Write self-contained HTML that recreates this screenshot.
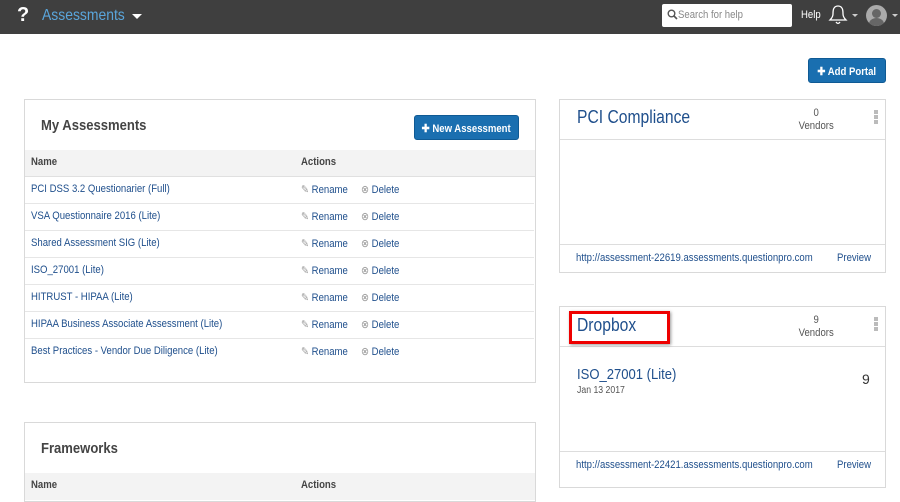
<!DOCTYPE html>
<html><head><meta charset="utf-8"><style>
*{margin:0;padding:0;box-sizing:border-box}
body{width:900px;height:487px;overflow:hidden;background:#fff;font-family:"Liberation Sans",sans-serif;position:relative;color:#333}
.a{position:absolute;white-space:nowrap}
.s{transform:scaleX(.87);transform-origin:0 0}
.i{display:inline-block;transform:scaleX(.87);transform-origin:0 0;white-space:nowrap}
.ic2{display:inline-block;transform:scaleX(.87);transform-origin:50% 0;white-space:nowrap}
.hdr{left:0;top:0;width:900px;height:34px;background:#3f3f3f}
.card{border:1px solid #d9d9d9;background:#fff}
.btn{background:#1a6fb0;border:1px solid #0f5a94;border-radius:3px;color:#fff;font-size:11px;font-weight:bold;text-align:center}
.row{left:25px;width:509px;height:27px;border-bottom:1px solid #e6e6e6;font-size:11px}
.row .n{position:absolute;left:6px;top:6px;color:#1f4f8c}
.row .r{position:absolute;left:276px;top:6px;color:#1f4f8c}
.row .d{position:absolute;left:336px;top:6px;color:#1f4f8c}
.ic{color:#999}
</style></head><body>
<div class="a hdr"></div>
<div class="a" style="left:17px;top:4px;color:#fff;font:bold 20px 'Liberation Sans',sans-serif">?</div>
<div class="a s" style="left:42px;top:7px;color:#5aa6dc;font-size:16px">Assessments</div>
<div class="a" style="left:132px;top:14px;width:0;height:0;border-left:5px solid transparent;border-right:5px solid transparent;border-top:5px solid #fff"></div>
<div class="a" style="left:662px;top:4px;width:130px;height:23px;background:#fff;border-radius:2px;font-size:11px;color:#888;padding:5px 0 0 16px"><span class="i">Search for help</span></div>
<svg class="a" style="left:667px;top:9px" width="11" height="11"><circle cx="4.5" cy="4.5" r="3.3" fill="none" stroke="#555" stroke-width="1.4"/><line x1="7" y1="7" x2="10" y2="10" stroke="#555" stroke-width="1.6"/></svg>
<div class="a s" style="left:801px;top:9px;color:#fff;font-size:11px">Help</div>
<svg class="a" style="left:828px;top:4px" width="20" height="21"><path d="M10 2 C5 2 5 7 5 10 C5 13 3 15 2 16 L18 16 C17 15 15 13 15 10 C15 7 15 2 10 2Z M8 18 Q10 21 12 18" fill="none" stroke="#fff" stroke-width="1.3"/></svg>
<div class="a" style="left:852px;top:14px;border-left:3px solid transparent;border-right:3px solid transparent;border-top:3px solid #ccc"></div>
<div class="a" style="left:866px;top:5px;width:21px;height:21px;border-radius:50%;background:#aaa;overflow:hidden"><div class="a" style="left:6px;top:4px;width:9px;height:9px;border-radius:50%;background:#666"></div><div class="a" style="left:3px;top:13px;width:15px;height:12px;border-radius:50%;background:#666"></div></div>
<div class="a" style="left:892px;top:14px;border-left:3px solid transparent;border-right:3px solid transparent;border-top:3px solid #ccc"></div>

<div class="a btn" style="left:808px;top:58px;width:78px;height:25px;padding-top:6px"><span class="ic2">✚ Add Portal</span></div>

<div class="a card" style="left:24px;top:99px;width:512px;height:284px"></div>
<div class="a s" style="left:41px;top:117px;font-size:15px;font-weight:bold;color:#444">My Assessments</div>
<div class="a btn" style="left:414px;top:115px;width:105px;height:25px;padding-top:6px"><span class="ic2">✚ New Assessment</span></div>
<div class="a" style="left:25px;top:150px;width:510px;height:27px;background:#f3f3f3;border-bottom:1px solid #e0e0e0;font-size:11px;font-weight:bold;color:#444"><span class="a s" style="left:6px;top:6px">Name</span><span class="a s" style="left:276px;top:6px">Actions</span></div>
<div class="a row" style="top:177px"><span class="n s">PCI DSS 3.2 Questionarier (Full)</span><span class="r s"><span class="ic">✎</span> Rename</span><span class="d s"><span class="ic">⊗</span> Delete</span></div>
<div class="a row" style="top:204px"><span class="n s">VSA Questionnaire 2016 (Lite)</span><span class="r s"><span class="ic">✎</span> Rename</span><span class="d s"><span class="ic">⊗</span> Delete</span></div>
<div class="a row" style="top:231px"><span class="n s">Shared Assessment SIG (Lite)</span><span class="r s"><span class="ic">✎</span> Rename</span><span class="d s"><span class="ic">⊗</span> Delete</span></div>
<div class="a row" style="top:258px"><span class="n s">ISO_27001 (Lite)</span><span class="r s"><span class="ic">✎</span> Rename</span><span class="d s"><span class="ic">⊗</span> Delete</span></div>
<div class="a row" style="top:285px"><span class="n s">HITRUST - HIPAA (Lite)</span><span class="r s"><span class="ic">✎</span> Rename</span><span class="d s"><span class="ic">⊗</span> Delete</span></div>
<div class="a row" style="top:312px"><span class="n s">HIPAA Business Associate Assessment (Lite)</span><span class="r s"><span class="ic">✎</span> Rename</span><span class="d s"><span class="ic">⊗</span> Delete</span></div>
<div class="a row" style="top:339px;border-bottom:none"><span class="n s">Best Practices - Vendor Due Diligence (Lite)</span><span class="r s"><span class="ic">✎</span> Rename</span><span class="d s"><span class="ic">⊗</span> Delete</span></div>

<div class="a card" style="left:24px;top:422px;width:512px;height:80px"></div>
<div class="a s" style="left:41px;top:440px;font-size:15px;font-weight:bold;color:#444">Frameworks</div>
<div class="a" style="left:25px;top:473px;width:510px;height:27px;background:#f3f3f3;font-size:11px;font-weight:bold;color:#444"><span class="a s" style="left:6px;top:6px">Name</span><span class="a s" style="left:276px;top:6px">Actions</span></div>

<div class="a card" style="left:559px;top:99px;width:327px;height:174px"></div>
<div class="a" style="left:560px;top:139px;width:325px;border-top:1px solid #ddd"></div>
<div class="a" style="left:560px;top:244px;width:325px;border-top:1px solid #ddd"></div>
<div class="a s" style="left:577px;top:107px;font-size:18px;color:#1f4f8c">PCI Compliance</div>
<div class="a" style="left:790px;top:107px;width:52px;text-align:center;font-size:11px;color:#555;line-height:13px"><span class="ic2">0<br>Vendors</span></div>
<div class="a" style="left:874px;top:110px;width:4px;height:14px;background:repeating-linear-gradient(#bbb 0 4px,transparent 4px 5px)"></div>
<div class="a s" style="left:576px;top:252px;font-size:11px;color:#1f4f8c">http://assessment-22619.assessments.questionpro.com</div>
<div class="a s" style="left:837px;top:252px;font-size:11px;color:#1f4f8c">Preview</div>

<div class="a card" style="left:559px;top:306px;width:327px;height:182px"></div>
<div class="a" style="left:560px;top:346px;width:325px;border-top:1px solid #ddd"></div>
<div class="a" style="left:560px;top:451px;width:325px;border-top:1px solid #ddd"></div>
<div class="a" style="left:569px;top:311px;width:101px;height:33px;border:3px solid #e00;box-shadow:1px 1px 3px rgba(0,0,0,.4)"></div>
<div class="a s" style="left:577px;top:315px;font-size:18px;color:#1f4f8c">Dropbox</div>
<div class="a" style="left:790px;top:314px;width:52px;text-align:center;font-size:11px;color:#555;line-height:13px"><span class="ic2">9<br>Vendors</span></div>
<div class="a" style="left:874px;top:317px;width:4px;height:14px;background:repeating-linear-gradient(#bbb 0 4px,transparent 4px 5px)"></div>
<div class="a s" style="left:577px;top:366px;font-size:15px;color:#1f4f8c">ISO_27001 (Lite)</div>
<div class="a s" style="left:577px;top:385px;font-size:10px;color:#555">Jan 13 2017</div>
<div class="a" style="left:862px;top:371px;font-size:14px;color:#333">9</div>
<div class="a s" style="left:576px;top:459px;font-size:11px;color:#1f4f8c">http://assessment-22421.assessments.questionpro.com</div>
<div class="a s" style="left:837px;top:459px;font-size:11px;color:#1f4f8c">Preview</div>
</body></html>
